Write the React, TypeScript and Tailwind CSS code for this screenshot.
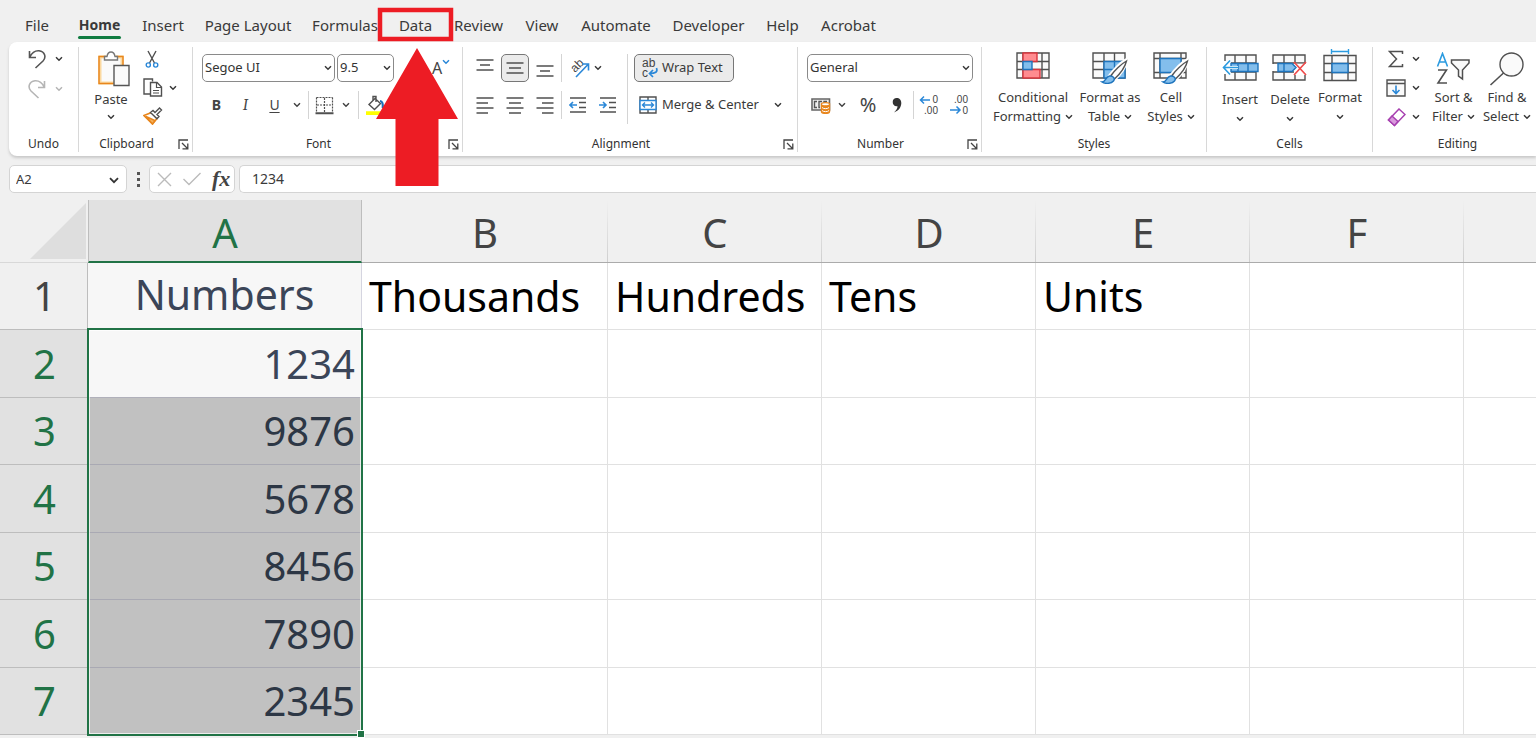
import type { ReactNode } from "react"
import clsx from "clsx"

const TABS = [
  { label: "File", width: "w-[31px]" },
  { label: "Home", width: "w-[43px]" },
  { label: "Insert", width: "w-10" },
  { label: "Page Layout", width: "w-[86px]" },
  { label: "Formulas", width: "w-16" },
  { label: "Data", width: "w-[33px]" },
  { label: "Review", width: "w-[49px]" },
  { label: "View", width: "w-[34px]" },
  { label: "Automate", width: "w-[70px]" },
  { label: "Developer", width: "w-[71px]" },
  { label: "Help", width: "w-[33px]" },
  { label: "Acrobat", width: "w-[55px]" },
]

const COLUMNS = ["A", "B", "C", "D", "E", "F", ""]

const ROWS = [
  ["Numbers", "Thousands", "Hundreds", "Tens", "Units", "", ""],
  ["1234", "", "", "", "", "", ""],
  ["9876", "", "", "", "", "", ""],
  ["5678", "", "", "", "", "", ""],
  ["8456", "", "", "", "", "", ""],
  ["7890", "", "", "", "", "", ""],
  ["2345", "", "", "", "", "", ""],
]

interface IconProps {
  w: number
  h: number
  children: ReactNode
  className?: string
}

function Icon({ w, h, children, className }: IconProps) {
  return (
    <svg
      width={w}
      height={h}
      viewBox={`0 0 ${w} ${h}`}
      fill="none"
      stroke="#505050"
      strokeWidth={1.4}
      className={clsx("shrink-0", className)}
      aria-hidden="true"
    >
      {children}
    </svg>
  )
}

function Chevron({ className }: { className?: string }) {
  return (
    <Icon w={8} h={6} className={className}>
      <path d="M1 1.2 4 4.2 7 1.2" stroke="currentColor" strokeWidth={1.5} />
    </Icon>
  )
}

function IconButton({ label, className, children }: { label: string; className?: string; children: ReactNode }) {
  return (
    <button type="button" aria-label={label} className={clsx("flex shrink-0 items-center justify-center", className)}>
      {children}
    </button>
  )
}

function Divider({ className }: { className?: string }) {
  return <div className={clsx("w-px shrink-0 bg-[#d4d4d4]", className)} />
}

interface GroupProps {
  label: string
  width: string
  launcher?: boolean
  last?: boolean
  children: ReactNode
}

function Group({ label, width, launcher, last, children }: GroupProps) {
  return (
    <section aria-label={label} className={clsx("flex shrink-0 flex-col", width, !last && "border-r border-[#d8d8d8]")}>
      <div className="flex h-[89px]">{children}</div>
      <div className="flex h-4 items-center text-xs text-[#333]">
        <span className="flex-1 text-center">{label}</span>
        {launcher && (
          <IconButton label={`${label} settings`} className="w-[18px]">
            <Icon w={11} h={11}>
              <path d="M1 10V1H10M4 4 9.5 9.5M9.8 4.5V9.8H4.5" stroke="#444" strokeWidth={1.3} />
            </Icon>
          </IconButton>
        )}
      </div>
    </section>
  )
}

function Dropdown({ label, value, className }: { label: string; value: string; className: string }) {
  return (
    <div className={clsx("relative h-7 shrink-0", className)}>
      <select
        aria-label={label}
        className="h-full w-full appearance-none rounded-[5px] border border-[#8a8a8a] bg-white pl-[2px] text-[13px] text-[#333]"
      >
        <option>{value}</option>
      </select>
      <Chevron className="pointer-events-none absolute top-[11px] right-[3px]" />
    </div>
  )
}

interface BigButtonProps {
  icon: ReactNode
  lines: string[]
  className: string
}

function BigButton({ icon, lines, className }: BigButtonProps) {
  const [first, second] = lines
  return (
    <button type="button" className={clsx("flex shrink-0 flex-col items-center text-[13px] leading-[19px] whitespace-nowrap text-[#3a3a3a]", className)}>
      <span className="flex h-9 items-start justify-center">{icon}</span>
      <span>{first}</span>
      <span className="flex h-[19px] items-center gap-1">
        {second}
        <Chevron />
      </span>
    </button>
  )
}

/* Icons */

function UndoIcon() {
  return (
    <Icon w={18} h={20}>
      <path d="M1.5 2V8.5H8M1.8 8.2C4 3.5 7 1.5 11 1.8C17 2.5 18.5 8.5 15 12L7.5 19" stroke="#555" strokeWidth={1.6} />
    </Icon>
  )
}

function RedoIcon() {
  return (
    <Icon w={18} h={20}>
      <path d="M16.5 2V8.5H10M16.2 8.2C14 3.5 11 1.5 7 1.8C1 2.5-.5 8.5 3 12L10.5 19" stroke="#b5b5b5" strokeWidth={1.6} />
    </Icon>
  )
}

function PasteIcon() {
  return (
    <Icon w={32} h={36} className="ml-[5px]">
      <path d="M2 6H24V32H2Z" fill="#fafafa" stroke="#fbd9a0" strokeWidth={3} />
      <path d="M15.5 32.5H1V5.5H8M18 5.5H25V14" stroke="#e8861d" strokeWidth={1.5} />
      <path d="M6.5 9V5.5H9C9.5 2.5 11 1 13 1S16.5 2.5 17 5.5H19.5V9Z" fill="#fff" stroke="#777" />
      <path d="M16 14.5H31V34.5H16Z" fill="#fafafa" stroke="#555" />
    </Icon>
  )
}

function CutIcon() {
  return (
    <Icon w={14} h={18}>
      <path d="M3 1 9.5 13M11 1 4.5 13" />
      <circle cx="3.3" cy="15" r="2.1" stroke="#2b88d8" />
      <circle cx="10.7" cy="15" r="2.1" stroke="#2b88d8" />
    </Icon>
  )
}

function CopyIcon() {
  return (
    <Icon w={20} h={19}>
      <path d="M7.5 16H1V1H9.5V3.5" />
      <path d="M7.5 4.5H14L18.5 9V18H7.5Z" fill="#fff" />
      <path d="M13.5 4.5V9.5H18.5M10 12.5H16M10 15H16" strokeWidth={1.2} />
    </Icon>
  )
}

function PainterIcon() {
  return (
    <Icon w={20} h={18}>
      <path d="M1 8.5 8.5 5.5 14 11.5 9.5 17Z" fill="#fff" stroke="#e8861d" strokeWidth={1.6} />
      <path d="M3 9.5 12 13.5 9.5 17Z" fill="#f7b35e" stroke="#e8861d" />
      <path d="M7.5 5.5 10 3.5 12 5.5 16.5 1 18.5 3 14 7.5 16 9.5 14 11.8Z" fill="#fff" />
    </Icon>
  )
}

function BordersIcon() {
  return (
    <Icon w={19} h={19}>
      <path d="M1.5 1.5H17.5M1.5 1.5V16M17.5 1.5V16" strokeDasharray="2 1" strokeWidth={1.2} />
      <path d="M9.5 2V16M2 9H17" strokeDasharray="2 1" strokeWidth={1.2} />
      <path d="M.5 17.2H18.5" strokeWidth={2} />
    </Icon>
  )
}

function FillIcon() {
  return (
    <Icon w={20} h={20}>
      <path d="M9 3.5 3 9.5 8.5 14.5 14.5 8.5 9 3.5ZM7 6V1.5H10V7" />
      <path d="M14 6C16.5 6 17 9 16.8 13" stroke="#1a6fb8" strokeWidth={2.2} />
      <path d="M0 16.2H20V20H0Z" fill="#ff0" stroke="none" />
    </Icon>
  )
}

function LinesIcon({ d }: { d: string }) {
  return (
    <Icon w={18} h={18}>
      <path d={d} strokeWidth={1.5} />
    </Icon>
  )
}

function OrientationIcon() {
  return (
    <Icon w={24} h={24} className="overflow-visible">
      <text transform="translate(7 17) rotate(-45)" fontSize="12" fill="#444" stroke="none" fontFamily="Liberation Sans, sans-serif">ab</text>
      <path d="M8 21 20 8.5M14 8H20.5V14.5" stroke="#2b88d8" strokeWidth={1.6} />
    </Icon>
  )
}

function IndentIcon({ out }: { out?: boolean }) {
  return (
    <Icon w={18} h={16}>
      <path d="M1 1H17M10 5.5H17M10 10.5H17M1 15H17" strokeWidth={1.5} />
      <path d={out ? "M8 8H1.5M4 5 1 8 4 11" : "M0 8H6.5M4 5 7 8 4 11"} stroke="#2b88d8" strokeWidth={1.6} />
    </Icon>
  )
}

function WrapIcon() {
  return (
    <Icon w={18} h={24}>
      <text fontSize="12" fill="#444" stroke="none" fontFamily="Liberation Sans, sans-serif">
        <tspan x="1" y="11">ab</tspan>
        <tspan x="1" y="21">c</tspan>
      </text>
      <path d="M15.5 12C17 16 14.5 17.5 8.5 17.5M12 14 8.5 17.5 12 21" stroke="#2b88d8" strokeWidth={1.7} />
    </Icon>
  )
}

function MergeIcon() {
  return (
    <Icon w={18} h={18}>
      <path d="M1 1H17V17H1ZM9 1V4.5M9 13.5V17" />
      <path d="M1 4.5H17V13.5H1Z" fill="#fff" stroke="#2b88d8" />
      <path d="M3.5 9H14.5M6 6.5 3.5 9 6 11.5M12 6.5 14.5 9 12 11.5" stroke="#2b88d8" />
    </Icon>
  )
}

function AccountingIcon() {
  return (
    <Icon w={20} h={17}>
      <path d="M1 2H18.5V13H1Z" fill="#eee" stroke="#666" strokeWidth={1.6} />
      <path d="M6 4.5H3.5V10.5H6M11 4.5H8V10.5H9M16 4.5H13V7" stroke="#555" />
      <path d="M10.5 7V14.5C10.5 17 18.5 17 18.5 14.5V7Z" fill="#e8861d" stroke="#e8861d" />
      <ellipse cx="14.5" cy="7.2" rx="4" ry="1.6" fill="#fff" stroke="#e8861d" strokeWidth={1.2} />
      <path d="M11 10.5C12 12 17 12 18 10.5M11 13.5C12 15 17 15 18 13.5" stroke="#fff" strokeWidth={1} />
    </Icon>
  )
}

function DecimalIcon({ increase }: { increase?: boolean }) {
  return (
    <Icon w={20} h={24}>
      <text fontSize="10" fill="#444" stroke="none" textAnchor="end" fontFamily="Liberation Sans, sans-serif">
        <tspan x="19" y="10">{increase ? "0" : ".00"}</tspan>
        <tspan x="19" y="21">{increase ? ".00" : "0"}</tspan>
      </text>
      <path d={increase ? "M11 7H1.5M5 3.5 1.5 7 5 10.500" : "M1 17H11M7.500 13.5 11 17 7.500 20.5"} stroke="#2b88d8" strokeWidth={1.5} />
    </Icon>
  )
}

function ConditionalIcon() {
  return (
    <Icon w={34} h={28}>
      <path d="M1 1H33V26H1ZM1 9.5H33M1 17.5H33M7 1V26M26 1V26" fill="#fafafa" />
      <path d="M7 1H21V9.5H7ZM7 17.5H24V26H7Z" fill="#ff8c90" stroke="#d9363e" />
      <path d="M7 9.5H16V17.5H7Z" fill="#83beec" stroke="#1e74bd" />
    </Icon>
  )
}

function Brush() {
  return (
    <>
      <path d="M34 8.5C28 12 21 20 18 24L22 27.5C28 22 33 15 34 8.5Z" fill="#fff" stroke="#fff" strokeWidth={4} />
      <path d="M34.5 9C29 12 22 19 19 23.5L22.5 27C28.5 21.5 33 15 34.5 9Z" fill="#fff" stroke="#555" />
      <path d="M10 30C14 30 13 25 17.5 24C21 23.5 23.5 26.5 21.5 29C19 32 13 32 10 30Z" fill="#83beec" stroke="#1e74bd" />
    </>
  )
}

function FormatTableIcon() {
  return (
    <Icon w={36} h={32}>
      <path d="M1 1H33V26H1ZM1 9.5H33M1 17.5H33M12 1V26M22.5 1V26" fill="#fafafa" />
      <path d="M12 9.5H33V26H12ZM12 17.5H33M22.5 9.5V26" fill="#83beec" stroke="#1e74bd" />
      <Brush />
    </Icon>
  )
}

function CellStylesIcon() {
  return (
    <Icon w={36} h={32}>
      <path d="M1 1H33V26H1ZM1 6.5H33M1 20.5H33M7 1V26M28 1V26" fill="#fafafa" />
      <path d="M7 6.5H28V20.5H7Z" fill="#83beec" stroke="#1e74bd" />
      <Brush />
    </Icon>
  )
}

function InsertIcon() {
  return (
    <Icon w={37} h={28}>
      <path d="M3 1H34V26H3ZM3 9H34M3 18H34M13 1V26M24 1V26" fill="#fafafa" />
      <path d="M0 7H9V20H0Z" fill="#fff" stroke="none" />
      <path d="M9 9.5H36V17.5H9ZM16 9.5V17.5M26 9.5V17.5" fill="#83beec" stroke="#1e74bd" />
      <path d="M16 13.5H1.5M8 6.5 1.5 13.5 8 20.5" stroke="#fff" strokeWidth={3} />
      <path d="M16 13.5H1.5M8 6.5 1.5 13.5 8 20.5" stroke="#2b9be0" strokeWidth={1.6} />
    </Icon>
  )
}

function DeleteIcon() {
  return (
    <Icon w={36} h={28}>
      <path d="M1 1H33V26H1ZM1 9H33M1 18H33M12 1V26M23 1V26" fill="#fafafa" />
      <path d="M0 10H6V17H0ZM22 9.7H36V21H22Z" fill="#fff" stroke="none" />
      <path d="M6 9.5H20L24 13.5 20 17.5H6ZM12 9.5V17.5" fill="#83beec" stroke="#1e74bd" />
      <path d="M22 8 34 21M34 8 22 21" stroke="#f04b4b" strokeWidth={1.7} />
    </Icon>
  )
}

function FormatIcon() {
  return (
    <Icon w={34} h={33} className="-mt-[3px]">
      <path d="M8.5 2.5H25.5M8.5 0V5M25.5 0V5" stroke="#2b9be0" />
      <path d="M1 6.5H33V31.5H1ZM1 14.5H33M1 23.5H33M9 6.5V31.5M25 6.5V31.5" fill="#fafafa" />
      <path d="M9 14.5H25V23.5H9Z" fill="#83beec" stroke="#1e74bd" />
    </Icon>
  )
}

function SumIcon() {
  return (
    <Icon w={18} h={18}>
      <path d="M15.5 4V1.5H2.5L9.5 9 2.5 16.5H15.5V14" strokeWidth={1.5} />
    </Icon>
  )
}

function FillDownIcon() {
  return (
    <Icon w={20} h={18}>
      <path d="M1 1H19V17H1ZM1 4.5H19" fill="#fafafa" />
      <path d="M10 6.5V14.5M6.5 11 10 14.5 13.5 11" stroke="#2b88d8" strokeWidth={1.6} />
    </Icon>
  )
}

function EraserIcon() {
  return (
    <Icon w={19} h={19}>
      <path d="M12 1 18 6.5 7.5 17.5 1.5 12Z" fill="#fff" stroke="#a740b0" strokeWidth={1.5} />
      <path d="M5 8 11 13.5 7.5 17.5 1.5 12Z" fill="#d99add" stroke="#a740b0" strokeWidth={1.5} />
    </Icon>
  )
}

function SortIcon() {
  return (
    <Icon w={35} h={34}>
      <path d="M1.5 14.5 6.5 1.5 11.5 14.5M3 10H10" stroke="#2b9be0" strokeWidth={1.6} />
      <path d="M2 18H10.5L2 31H11" strokeWidth={1.6} />
      <path d="M15.5 8H33V11L26.5 18V27L22.5 24V18L15.5 11Z" fill="#fafafa" strokeWidth={1.5} />
    </Icon>
  )
}

function FindIcon() {
  return (
    <Icon w={36} h={34}>
      <circle cx="22.5" cy="12.5" r="11.5" fill="#fafafa" />
      <path d="M14.5 21 1.5 33" strokeWidth={1.6} />
    </Icon>
  )
}

/* Sections */

function TabBar() {
  return (
    <nav className="flex h-[42px] items-end gap-[22px] overflow-hidden pl-[25px] text-[15px] text-[#3a3a3a]">
      {TABS.map((tab) => (
        <button
          key={tab.label}
          type="button"
          className={clsx(
            "relative flex h-[34px] shrink-0 items-center whitespace-nowrap",
            tab.width,
            tab.label !== "File" && "justify-center",
            tab.label === "Home" && "text-sm font-bold",
          )}
        >
          {tab.label}
          {tab.label === "Home" && <span className="absolute inset-x-0 bottom-[3px] h-[3px] rounded-full bg-[#107c41]" />}
        </button>
      ))}
    </nav>
  )
}

function UndoGroup() {
  return (
    <Group label="Undo" width="w-[70px]">
      <div className="flex flex-col gap-[10px] pt-[2px] pl-[19px]">
        <div className="flex items-center gap-[9px]">
          <IconButton label="Undo"><UndoIcon /></IconButton>
          <IconButton label="Undo history"><Chevron /></IconButton>
        </div>
        <div className="flex items-center gap-[9px] text-[#b5b5b5]">
          <IconButton label="Redo"><RedoIcon /></IconButton>
          <IconButton label="Redo history"><Chevron /></IconButton>
        </div>
      </div>
    </Group>
  )
}

function ClipboardGroup() {
  return (
    <Group label="Clipboard" width="w-[114px]" launcher>
      <button type="button" className="flex w-16 flex-col items-center pt-1 text-[13px] leading-[19px] text-[#3a3a3a]">
        <PasteIcon />
        <span className="mt-[3px]">Paste</span>
        <Chevron className="mt-[5px]" />
      </button>
      <div className="flex flex-col gap-[10px] pt-[3px]">
        <IconButton label="Cut" className="h-[18px] w-[18px]"><CutIcon /></IconButton>
        <div className="flex h-[19px] items-center gap-[6px]">
          <IconButton label="Copy"><CopyIcon /></IconButton>
          <IconButton label="Copy options"><Chevron /></IconButton>
        </div>
        <IconButton label="Format Painter" className="h-[18px] w-5"><PainterIcon /></IconButton>
      </div>
    </Group>
  )
}

function FontGroup() {
  return (
    <Group label="Font" width="w-[270px]" launcher>
      <div className="flex flex-col gap-[9px] pt-[7px] pl-[9px]">
        <div className="flex items-center">
          <Dropdown label="Font name" value="Segoe UI" className="w-[133px]" />
          <Dropdown label="Font size" value="9.5" className="ml-[2px] w-[57px]" />
          <button type="button" aria-label="Increase font size" className="ml-2 w-[18px] text-lg text-[#444]">A</button>
          <button type="button" aria-label="Decrease font size" className="ml-3 flex items-center text-base text-[#444]">
            A
            <Chevron className="mb-3 text-[#2b88d8]" />
          </button>
        </div>
        <div className="flex h-7 items-center text-sm text-[#444]">
          <IconButton label="Bold" className="w-[29px]"><b>B</b></IconButton>
          <IconButton label="Italic" className="w-[29px]"><i className="font-serif text-base">I</i></IconButton>
          <IconButton label="Underline" className="w-[29px]"><u className="underline-offset-2">U</u></IconButton>
          <IconButton label="Underline options" className="w-4"><Chevron /></IconButton>
          <Divider className="ml-[3px] h-7" />
          <IconButton label="Borders" className="ml-[6px]"><BordersIcon /></IconButton>
          <IconButton label="Border options" className="ml-2"><Chevron /></IconButton>
          <Divider className="ml-2 h-7" />
          <IconButton label="Fill colour" className="ml-[7px]"><FillIcon /></IconButton>
        </div>
      </div>
    </Group>
  )
}

function AlignmentGroup() {
  return (
    <Group label="Alignment" width="w-[335px]" launcher>
      <div className="flex flex-col gap-[9px] pt-[7px] pl-2">
        <div className="flex h-7 items-center gap-[2px]">
          <IconButton label="Top align" className="w-7"><LinesIcon d="M.5 1H17.500M4 6H14M.5 11H17.500" /></IconButton>
          <IconButton label="Middle align" className="h-7 w-7 rounded-[5px] border border-[#777] bg-[#ebebeb]"><LinesIcon d="M.5 4H17.500M3 9H15M.5 14H17.500" /></IconButton>
          <IconButton label="Bottom align" className="w-7"><LinesIcon d="M.5 7H17.500M4 12H14M.5 17H17.500" /></IconButton>
          <Divider className="h-7" />
          <IconButton label="Orientation" className="ml-1"><OrientationIcon /></IconButton>
          <IconButton label="Orientation options"><Chevron /></IconButton>
        </div>
        <div className="flex h-7 items-center gap-[2px]">
          <IconButton label="Align left" className="w-7"><LinesIcon d="M.5 2H17.500M.5 7H12M.5 12H17.500M.5 17H12" /></IconButton>
          <IconButton label="Center" className="w-7"><LinesIcon d="M.5 2H17.500M3 7H15M.5 12H17.500M3 17H15" /></IconButton>
          <IconButton label="Align right" className="w-7"><LinesIcon d="M.5 2H17.500M6 7H17.500M.5 12H17.500M6 17H17.500" /></IconButton>
          <Divider className="h-7" />
          <IconButton label="Decrease indent" className="ml-1 w-5"><IndentIcon out /></IconButton>
          <IconButton label="Increase indent" className="ml-2 w-5"><IndentIcon /></IconButton>
        </div>
      </div>
      <Divider className="mt-[7px] ml-[9px] h-[70px]" />
      <div className="flex flex-col items-start gap-[9px] pt-[7px] pl-[6px] text-[13px] whitespace-nowrap text-[#3a3a3a]">
        <button type="button" className="flex h-7 w-[100px] items-center gap-[3px] rounded-[5px] border border-[#777] bg-[#ebebeb] pl-[6px]">
          <WrapIcon />
          Wrap Text
        </button>
        <div className="flex h-7 items-center">
          <button type="button" className="flex w-[136px] items-center gap-[5px] pl-[5px]">
            <MergeIcon />
            Merge &amp; Center
          </button>
          <IconButton label="Merge options" className="ml-1"><Chevron /></IconButton>
        </div>
      </div>
    </Group>
  )
}

function NumberGroup() {
  return (
    <Group label="Number" width="w-[184px]" launcher>
      <div className="flex flex-col gap-[9px] pt-[7px] pl-[9px]">
        <Dropdown label="Number format" value="General" className="w-[166px]" />
        <div className="flex h-7 items-center text-[#444]">
          <IconButton label="Accounting format" className="ml-1"><AccountingIcon /></IconButton>
          <IconButton label="Accounting options" className="ml-[7px]"><Chevron /></IconButton>
          <IconButton label="Percent style" className="ml-3 w-5 text-xl">%</IconButton>
          <IconButton label="Comma style" className="ml-[14px]">
            <Icon w={10} h={16}>
              <path d="M4.5 1C7.5 1 9.5 3 9.3 6.5C9 11 6 14 2 15.5C4.5 13 5.5 11.5 5.5 9.3C2.5 9.8 .7 7.5 .7 5C.7 2.5 2.5 1 4.5 1Z" fill="#333" stroke="none" />
            </Icon>
          </IconButton>
          <Divider className="ml-[11px] h-7" />
          <IconButton label="Increase decimal" className="ml-[5px]"><DecimalIcon increase /></IconButton>
          <IconButton label="Decrease decimal" className="ml-[10px]"><DecimalIcon /></IconButton>
        </div>
      </div>
    </Group>
  )
}

function EditingGroup() {
  return (
    <Group label="Editing" width="w-[169px]" last>
      <div className="flex w-[54px] flex-col gap-[11px] pt-[3px] pl-[13px]">
        <div className="flex h-[18px] items-center gap-[6px]">
          <IconButton label="AutoSum" className="w-5"><SumIcon /></IconButton>
          <IconButton label="AutoSum options"><Chevron /></IconButton>
        </div>
        <div className="flex h-[18px] items-center gap-[6px]">
          <IconButton label="Fill"><FillDownIcon /></IconButton>
          <IconButton label="Fill options"><Chevron /></IconButton>
        </div>
        <div className="flex h-[18px] items-center gap-[6px]">
          <IconButton label="Clear" className="w-5"><EraserIcon /></IconButton>
          <IconButton label="Clear options"><Chevron /></IconButton>
        </div>
      </div>
      <BigButton icon={<SortIcon />} lines={["Sort &", "Filter"]} className="w-[53px] pt-[5px]" />
      <BigButton icon={<FindIcon />} lines={["Find &", "Select"]} className="w-[54px] pt-[5px]" />
    </Group>
  )
}

function Ribbon() {
  return (
    <div className="ml-[9px] flex overflow-hidden rounded-l-lg bg-white pt-[5px] pb-1 text-[#3a3a3a] shadow-[0_2px_3px_#c8c8c8]">
      <UndoGroup />
      <ClipboardGroup />
      <FontGroup />
      <AlignmentGroup />
      <NumberGroup />
      <Group label="Styles" width="w-[225px]">
        <BigButton icon={<ConditionalIcon />} lines={["Conditional", "Formatting"]} className="ml-2 w-[86px] pt-[5px]" />
        <BigButton icon={<FormatTableIcon />} lines={["Format as", "Table"]} className="w-[68px] pt-[5px]" />
        <BigButton icon={<CellStylesIcon />} lines={["Cell", "Styles"]} className="w-[54px] pt-[5px]" />
      </Group>
      <Group label="Cells" width="w-[166px]">
        <BigButton icon={<InsertIcon />} lines={["Insert"]} className="ml-2 w-[50px] pt-[7px]" />
        <BigButton icon={<DeleteIcon />} lines={["Delete"]} className="w-[50px] pt-[7px]" />
        <BigButton icon={<FormatIcon />} lines={["Format"]} className="w-[50px] pt-[5px]" />
      </Group>
      <EditingGroup />
    </div>
  )
}

function FormulaBar() {
  return (
    <div className="mt-[9px] flex h-7 items-stretch pl-[9px] text-sm text-[#3a3a3a]">
      <div className="relative w-[118px] shrink-0">
        <input
          aria-label="Name box"
          defaultValue="A2"
          className="h-full w-full rounded-[5px] border border-[#d4d4d4] bg-white pl-[6px] text-[13px]"
        />
        <IconButton label="Named ranges" className="absolute top-3 right-2">
          <Icon w={10} h={7}>
            <path d="M1 1.2 5 5.2 9 1.2" stroke="#333" strokeWidth={1.8} />
          </Icon>
        </IconButton>
      </div>
      <div className="flex w-[22px] shrink-0 flex-col items-center justify-center gap-[3px]">
        <i className="size-[3px] bg-[#555]" />
        <i className="size-[3px] bg-[#555]" />
        <i className="size-[3px] bg-[#555]" />
      </div>
      <div className="flex w-[86px] shrink-0 items-center gap-[11px] rounded-[5px] border border-[#d4d4d4] bg-white pl-[7px]">
        <IconButton label="Cancel">
          <Icon w={15} h={15}>
            <path d="M1 1 14 14M14 1 1 14" stroke="#bbb" />
          </Icon>
        </IconButton>
        <IconButton label="Enter">
          <Icon w={18} h={14}>
            <path d="M.5 7 6 12.5 17.5 1" stroke="#bbb" />
          </Icon>
        </IconButton>
        <button type="button" className="font-['Liberation_Serif',serif] text-[22px] leading-6 font-bold text-[#444] italic">fx</button>
      </div>
      <input
        aria-label="Formula"
        defaultValue="1234"
        className="ml-1 min-w-0 flex-1 rounded-l-[5px] border border-r-0 border-[#d4d4d4] bg-white pl-3 text-sm"
      />
    </div>
  )
}

function Sheet() {
  return (
    <div className="relative mt-[7px]">
      <table className="w-full table-fixed border-separate border-spacing-0 text-[40px] leading-none">
        <colgroup>
          <col className="w-[88px]" />
          <col className="w-[274px]" />
          <col className="w-[246px]" />
          <col className="w-[214px]" />
          <col className="w-[214px]" />
          <col className="w-[214px]" />
          <col className="w-[214px]" />
          <col />
        </colgroup>
        <thead>
          <tr className="h-[63px]">
            <th className="border-b border-[#d8d8d8] bg-[#f0f0f0] p-0 align-top">
              <svg width="56" height="56" viewBox="0 0 56 56" className="mt-[3px] ml-[30px]" aria-hidden="true">
                <path d="M0 56 56 0V56Z" fill="#dedede" />
              </svg>
            </th>
            {COLUMNS.map((name, i) => (
              <th
                key={i}
                scope="col"
                className={clsx(
                  "p-0 pt-1 font-normal",
                  i === 0
                    ? "border-x border-b-2 border-r-[#bdbdbd] border-b-[#217346] border-l-[#bdbdbd] bg-[#e1e1e1] text-[#217346]"
                    : "border-b border-b-[#ababab] bg-[#f0f0f0] bg-[linear-gradient(#f0f0f0,#cfcfcf)] bg-[length:1px_100%] bg-right bg-no-repeat text-[#444] last:bg-none",
                )}
              >
                {name}
              </th>
            ))}
          </tr>
        </thead>
        <tbody>
          {ROWS.map((cells, r) => (
            <tr key={r} className="h-[67px] even:h-[68px]">
              <th
                scope="row"
                className={clsx(
                  "border-r border-b border-[#bdbdbd] p-0 pl-[2px] font-normal",
                  r === 0 ? "bg-[#f0f0f0] text-[#444]" : "bg-[#e1e1e1] text-[#217346]",
                )}
              >
                {r + 1}
              </th>
              {cells.map((text, c) => (
                <td
                  key={c}
                  className={clsx(
                    "border-r border-b p-0 whitespace-nowrap last:border-r-0",
                    c > 0 && "border-[#e1e1e1] bg-white pl-[7px] text-[41px] text-black",
                    c === 0 && r === 0 && "border-[#d5d5e0] bg-[#f7f7f7] pb-1 text-center text-[41px] text-[#3b4558]",
                    c === 0 && r === 1 && "border-[#b0b0ba] bg-[#f7f7f7] pr-[6px] text-right text-[#3b4558]",
                    c === 0 && r > 1 && "border-[#a9a9b3] bg-[#c1c1c1] pr-[6px] text-right text-[#2d3745]",
                  )}
                >
                  {text}
                </td>
              ))}
            </tr>
          ))}
        </tbody>
      </table>
      {/* Selected range A2:A7 */}
      <div className="pointer-events-none absolute top-[128px] -bottom-px left-[87px] w-[276px] border-2 border-[#217346]">
        <div className="h-full border border-white/70" />
        <span className="absolute -right-[3px] -bottom-[3px] size-[6px] bg-[#217346] outline outline-white" />
      </div>
    </div>
  )
}

function DataCallout() {
  return (
    <svg width="84" height="182" viewBox="0 0 84 182" className="pointer-events-none absolute top-[6px] left-[375px]" aria-hidden="true">
      <rect x="5" y="4" width="71" height="29" fill="none" stroke="#ed1c24" strokeWidth="4.5" />
      <path d="M42 42 83 113H63.500V180H20.500V113H1Z" fill="#ed1c24" />
    </svg>
  )
}

export default function App() {
  return (
    <div className="relative h-screen overflow-hidden bg-[#f0f0f0] font-['Noto_Sans',sans-serif]">
      <TabBar />
      <Ribbon />
      <FormulaBar />
      <Sheet />
      <DataCallout />
    </div>
  )
}
